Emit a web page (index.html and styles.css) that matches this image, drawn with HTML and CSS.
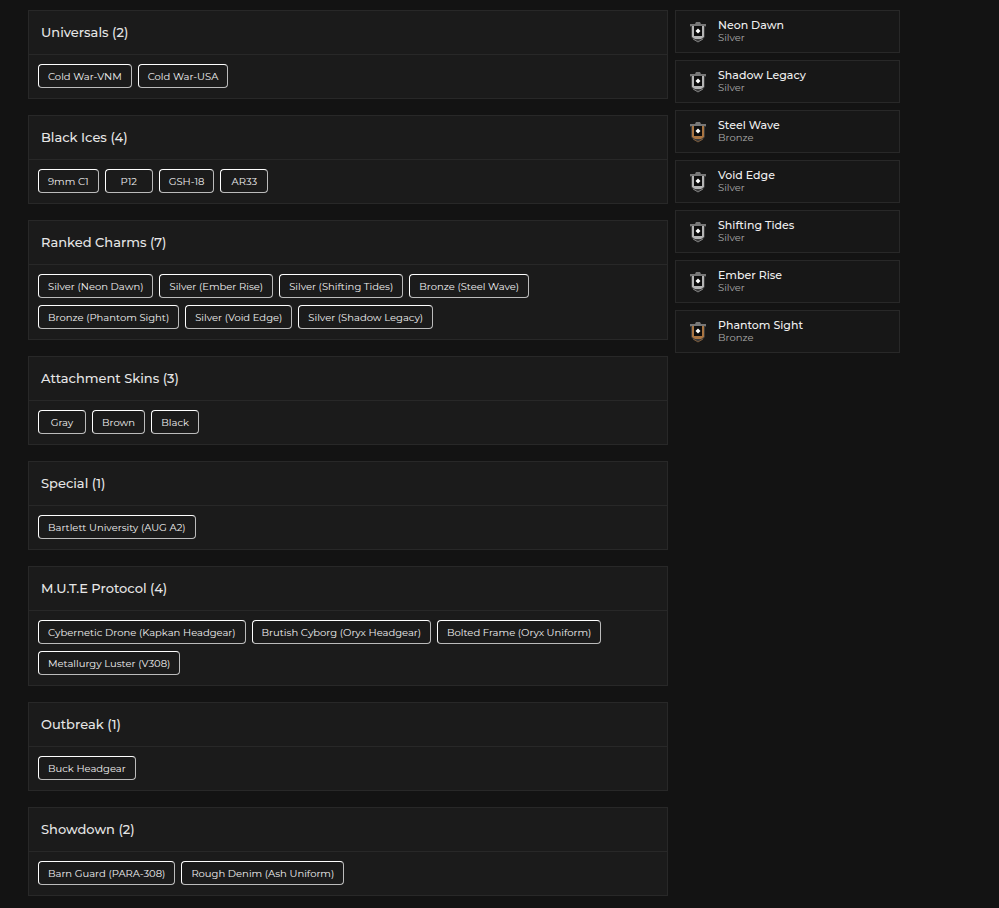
FILE: index.html
```html
<!DOCTYPE html>
<html lang="en">
<head>
    <meta charset="UTF-8">
    <meta name="viewport" content="width=device-width, initial-scale=1.0">
    <title>Inventory</title>
    <link rel="stylesheet" href="styles.css">
</head>
<body>
    <!-- Rank emblem, coloured by the parent's color -->
    <svg class="symbols" aria-hidden="true">
        <symbol id="emblem" viewBox="0 0 20 22">
            <path d="M2 3h16v3h-1v10l-3 3-4 2-4-2-3-3V6H2z" fill="#3c3c3c"/>
            <path d="M2 3h5l1-2h4l1 2h5v2H2z" fill="#777"/>
            <path d="M4 5h12v11l-3 2H7l-3-2z" fill="currentColor"/>
            <path d="M6 5h8v10H6z" fill="#0c0c0c"/>
            <path d="M5 18l5 3 5-3" fill="none" stroke="currentColor" opacity=".6"/>
            <path d="M10 7.500l2.500 2.500-2.500 2.500-2.500-2.500z" fill="#fff"/>
        </symbol>
    </svg>

    <div class="container">
        <main class="groups">
            <section class="group">
                <h2 class="group-title">Universals (2)</h2>
                <div class="items">
                    <button class="item">Cold War-VNM</button>
                    <button class="item">Cold War-USA</button>
                </div>
            </section>

            <section class="group">
                <h2 class="group-title">Black Ices (4)</h2>
                <div class="items">
                    <button class="item">9mm C1</button>
                    <button class="item">P12</button>
                    <button class="item">GSH-18</button>
                    <button class="item">AR33</button>
                </div>
            </section>

            <section class="group">
                <h2 class="group-title">Ranked Charms (7)</h2>
                <div class="items">
                    <button class="item">Silver (Neon Dawn)</button>
                    <button class="item">Silver (Ember Rise)</button>
                    <button class="item">Silver (Shifting Tides)</button>
                    <button class="item">Bronze (Steel Wave)</button>
                    <button class="item">Bronze (Phantom Sight)</button>
                    <button class="item">Silver (Void Edge)</button>
                    <button class="item">Silver (Shadow Legacy)</button>
                </div>
            </section>

            <section class="group">
                <h2 class="group-title">Attachment Skins (3)</h2>
                <div class="items">
                    <button class="item">Gray</button>
                    <button class="item">Brown</button>
                    <button class="item">Black</button>
                </div>
            </section>

            <section class="group">
                <h2 class="group-title">Special (1)</h2>
                <div class="items">
                    <button class="item">Bartlett University (AUG A2)</button>
                </div>
            </section>

            <section class="group">
                <h2 class="group-title">M.U.T.E Protocol (4)</h2>
                <div class="items">
                    <button class="item">Cybernetic Drone (Kapkan Headgear)</button>
                    <button class="item">Brutish Cyborg (Oryx Headgear)</button>
                    <button class="item">Bolted Frame (Oryx Uniform)</button>
                    <button class="item">Metallurgy Luster (V308)</button>
                </div>
            </section>

            <section class="group">
                <h2 class="group-title">Outbreak (1)</h2>
                <div class="items">
                    <button class="item">Buck Headgear</button>
                </div>
            </section>

            <section class="group">
                <h2 class="group-title">Showdown (2)</h2>
                <div class="items">
                    <button class="item">Barn Guard (PARA-308)</button>
                    <button class="item">Rough Denim (Ash Uniform)</button>
                </div>
            </section>
        </main>

        <!-- Ranks per season -->
        <aside class="seasons">
            <div class="season silver">
                <svg class="emblem"><use href="#emblem"/></svg>
                <div>
                    <div class="season-name">Neon Dawn</div>
                    <div class="season-rank">Silver</div>
                </div>
            </div>
            <div class="season silver">
                <svg class="emblem"><use href="#emblem"/></svg>
                <div>
                    <div class="season-name">Shadow Legacy</div>
                    <div class="season-rank">Silver</div>
                </div>
            </div>
            <div class="season bronze">
                <svg class="emblem"><use href="#emblem"/></svg>
                <div>
                    <div class="season-name">Steel Wave</div>
                    <div class="season-rank">Bronze</div>
                </div>
            </div>
            <div class="season silver">
                <svg class="emblem"><use href="#emblem"/></svg>
                <div>
                    <div class="season-name">Void Edge</div>
                    <div class="season-rank">Silver</div>
                </div>
            </div>
            <div class="season silver">
                <svg class="emblem"><use href="#emblem"/></svg>
                <div>
                    <div class="season-name">Shifting Tides</div>
                    <div class="season-rank">Silver</div>
                </div>
            </div>
            <div class="season silver">
                <svg class="emblem"><use href="#emblem"/></svg>
                <div>
                    <div class="season-name">Ember Rise</div>
                    <div class="season-rank">Silver</div>
                </div>
            </div>
            <div class="season bronze">
                <svg class="emblem"><use href="#emblem"/></svg>
                <div>
                    <div class="season-name">Phantom Sight</div>
                    <div class="season-rank">Bronze</div>
                </div>
            </div>
        </aside>
    </div>
</body>
</html>
```
FILE: styles.css
```css
* {
    box-sizing: border-box;
}

body {
    margin: 0;
    padding: 10px 28px;
    background-color: #131313;
    color: #e6e6e6;
    font-family: Montserrat, Inter, sans-serif;
}

.symbols {
    display: none;
}

.container {
    display: grid;
    grid-template-columns: 1fr 225px;
    gap: 7px;
    align-items: start;
    max-width: 872px;
}

.groups {
    display: flex;
    flex-direction: column;
    gap: 16px;
}

.group {
    background-color: #1b1b1b;
    border: 1px solid #282828;
}

.group-title {
    margin: 0;
    padding: 0 12px;
    border-bottom: 1px solid #282828;
    font-size: 13px;
    font-weight: 500;
    line-height: 43px;
}

.items {
    display: flex;
    flex-wrap: wrap;
    gap: 7px 6px;
    padding: 9px 9px 10px;
}

.item {
    min-width: 48px;
    height: 24px;
    padding: 0 9px;
    background-color: transparent;
    border: 1px solid;
    border-color: #fff #bbb #bbb #fff;
    border-radius: 4px;
    color: #f0f0f0;
    font-family: inherit;
    font-size: 10px;
    cursor: pointer;
}

.item:hover {
    background-color: #282828;
}

.seasons {
    display: flex;
    flex-direction: column;
    gap: 7px;
}

.season {
    display: flex;
    align-items: center;
    gap: 10px;
    height: 43px;
    padding: 0 12px;
    background-color: #171717;
    border: 1px solid #282828;
}

.emblem {
    width: 20px;
    height: 22px;
}

.silver .emblem {
    color: #b4b4b4;
}

.bronze .emblem {
    color: #a87442;
}

.season-name {
    color: #f0f0f0;
    font-size: 11px;
    font-weight: 500;
    line-height: 13px;
}

.season-rank {
    color: #aaa;
    font-size: 10px;
    line-height: 12px;
}
```
